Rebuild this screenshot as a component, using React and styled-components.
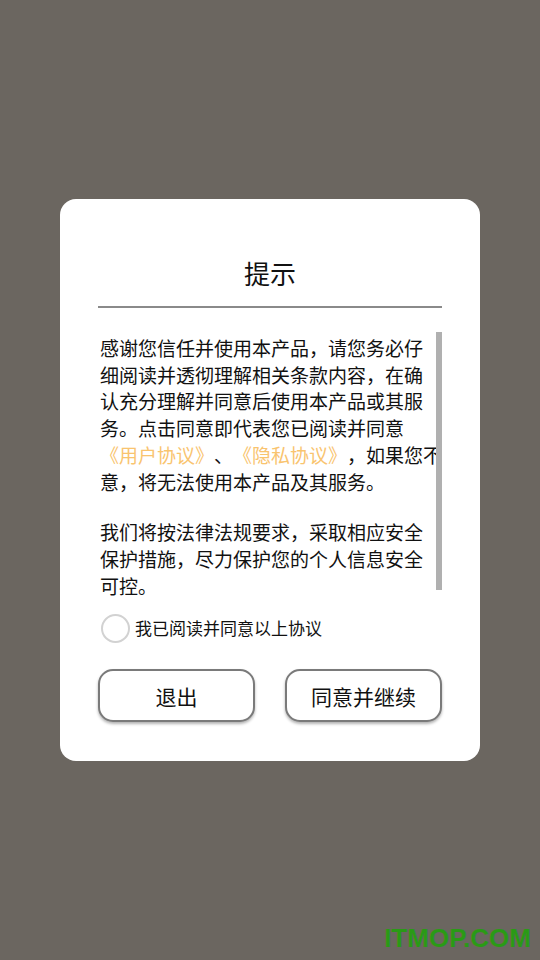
import React, { useState } from 'react'
import styled, { createGlobalStyle } from 'styled-components'

const GlobalStyle = createGlobalStyle`
  html, body {
    margin: 0;
    padding: 0;
    background: #6b6660;
  }
  * {
    box-sizing: border-box;
  }
`

const Screen = styled.div`
  position: relative;
  width: 540px;
  height: 960px;
  background: #6b6660;
  display: flex;
  align-items: center;
  justify-content: center;
  font-family: 'Noto Sans CJK SC', 'Noto Sans', sans-serif;
  color: #111111;
  text-spacing-trim: space-all;
`

const Dialog = styled.div`
  width: 420px;
  height: 562px;
  background: #ffffff;
  border-radius: 16px;
  padding: 54px 38px 39px;
  display: flex;
  flex-direction: column;
`

const Title = styled.div`
  height: 40px;
  line-height: 40px;
  font-size: 26px;
  text-align: center;
`

const Divider = styled.div`
  margin-top: 13px;
  height: 2px;
  background: #8a8a8a;
`

const ScrollArea = styled.div`
  position: relative;
  margin-top: 24px;
  height: 266px;
  overflow: hidden;
  padding: 3px 0 0 2px;
`

const Scrollbar = styled.div`
  position: absolute;
  top: 0;
  right: 0;
  width: 6px;
  height: 258px;
  background: #b0b0b0;
`

const Paragraph = styled.div`
  margin-bottom: ${(p) => (p.$last ? 0 : '24px')};
`

const Line = styled.div`
  font-size: 19px;
  line-height: 26.7px;
  white-space: nowrap;
  text-spacing-trim: space-all;
  font-feature-settings: 'halt' 0, 'chws' 0;
`

const Link = styled.span`
  color: #f9c46f;
`

const CheckRow = styled.label`
  margin-top: 15px;
  height: 30px;
  display: flex;
  align-items: center;
  gap: 5px;
  padding-left: 3px;
  cursor: pointer;
`

const Circle = styled.span`
  width: 29px;
  height: 29px;
  border-radius: 50%;
  border: 2px solid #d2d2d2;
  background: ${(p) => (p.$on ? '#f9c46f' : '#ffffff')};
`

const CheckText = styled.span`
  font-size: 17px;
  line-height: 30px;
`

const ButtonRow = styled.div`
  margin-top: 26px;
  display: flex;
  justify-content: space-between;
`

const Button = styled.button`
  width: 157px;
  height: 53px;
  border: 2px solid #7a7a7a;
  border-radius: 15px;
  background: #ffffff;
  box-shadow: 0 2px 3px rgba(0, 0, 0, 0.3);
  font-family: 'Noto Sans CJK SC', 'Noto Sans', sans-serif;
  font-size: 21px;
  color: #111111;
  padding: 0;
  cursor: pointer;
`

const Watermark = styled.div`
  position: absolute;
  right: 9px;
  bottom: 9px;
  font-family: 'Liberation Sans', Arial, sans-serif;
  font-weight: 700;
  font-size: 26px;
  line-height: 26px;
  color: #2a9a16;
`

export default function App() {
  const [agreed, setAgreed] = useState(false)

  return (
    <>
      <GlobalStyle />
      <Screen>
        <Dialog>
          <Title>提示</Title>
          <Divider />
          <ScrollArea>
            <Paragraph>
              <Line>感谢您信任并使用本产品，请您务必仔</Line>
              <Line>细阅读并透彻理解相关条款内容，在确</Line>
              <Line>认充分理解并同意后使用本产品或其服</Line>
              <Line>务。点击同意即代表您已阅读并同意</Line>
              <Line>
                <Link>《用户协议》</Link>、<Link>《隐私协议》</Link>，如果您不同
              </Line>
              <Line>意，将无法使用本产品及其服务。</Line>
            </Paragraph>
            <Paragraph $last>
              <Line>我们将按法律法规要求，采取相应安全</Line>
              <Line>保护措施，尽力保护您的个人信息安全</Line>
              <Line>可控。</Line>
            </Paragraph>
            <Scrollbar />
          </ScrollArea>
          <CheckRow onClick={() => setAgreed(!agreed)}>
            <Circle $on={agreed} />
            <CheckText>我已阅读并同意以上协议</CheckText>
          </CheckRow>
          <ButtonRow>
            <Button>退出</Button>
            <Button>同意并继续</Button>
          </ButtonRow>
        </Dialog>
        <Watermark>ITMOP.COM</Watermark>
      </Screen>
    </>
  )
}
